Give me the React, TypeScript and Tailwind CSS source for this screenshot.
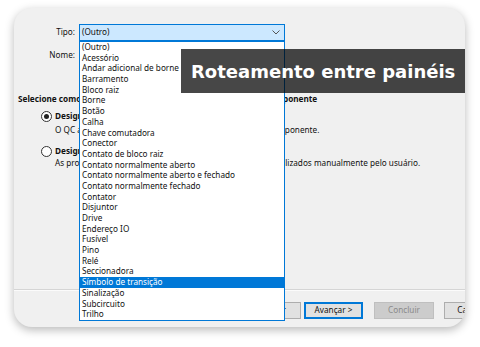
import React from 'react';

const items = [
  '(Outro)',
  'Acessório',
  'Andar adicional de borne',
  'Barramento',
  'Bloco raiz',
  'Borne',
  'Botão',
  'Calha',
  'Chave comutadora',
  'Conector',
  'Contato de bloco raiz',
  'Contato normalmente aberto',
  'Contato normalmente aberto e fechado',
  'Contato normalmente fechado',
  'Contator',
  'Disjuntor',
  'Drive',
  'Endereço IO',
  'Fusível',
  'Pino',
  'Relé',
  'Seccionadora',
  'Símbolo de transição',
  'Sinalização',
  'Subcircuito',
  'Trilho',
];

const selected = 'Símbolo de transição';

function Radio({ checked }: { checked?: boolean }) {
  return (
    <span className="w-[11px] h-[11px] rounded-full border border-[#333] bg-white flex items-center justify-center shrink-0">
      {checked && <span className="w-[5px] h-[5px] rounded-full bg-[#222]" />}
    </span>
  );
}

export default function App() {
  return (
    <div className="w-[480px] h-[347px] bg-white overflow-hidden pt-[8px] pl-[14px]">
      <div className="relative w-[451px] h-[319px] rounded-[18px] bg-[#f0f0f0] overflow-hidden shadow-[0_3px_10px_rgba(0,0,0,0.28)] font-['Noto_Sans',sans-serif] text-[8.2px] text-[#111] flex flex-col">
        {/* Tipo */}
        <div className="mt-[16px] flex items-center h-[17px]">
          <span className="w-[61px] text-right">Tipo:</span>
          <div className="ml-[4px] w-[206px] h-[17px] border border-[#0078d7] bg-[#cce8ff] flex items-center justify-between pl-[2px] pr-[4px]">
            <span>(Outro)</span>
            <svg width="8" height="5" viewBox="0 0 8 5" fill="none" stroke="#555" strokeWidth="1">
              <path d="M0.5 0.5 L4 4 L7.5 0.5" />
            </svg>
          </div>
        </div>

        {/* Nome */}
        <div className="mt-[6px] flex items-center h-[17px]">
          <span className="w-[61px] text-right">Nome:</span>
          <div className="ml-[4px] w-[206px] h-[17px] border border-[#7a7a7a] bg-white" />
        </div>

        <div className="mt-[29px] pl-[4px] h-[11px] leading-[11px] font-bold whitespace-nowrap">
          Selecione como deseja atribuir a designação ao novo tipo de componente
        </div>

        <div className="mt-[6px] pl-[27px] h-[12px] flex items-center gap-[3px]">
          <Radio checked />
          <span className="font-bold">Designação automática</span>
        </div>
        <div className="mt-[2px] pl-[41px] h-[11px] leading-[11px] whitespace-nowrap">
          O QC atribuirá automaticamente a designação ao novo componente.
        </div>

        <div className="mt-[10px] pl-[27px] h-[12px] flex items-center gap-[3px]">
          <Radio />
          <span className="font-bold">Designação manual</span>
        </div>
        <div className="pl-[41px] h-[11px] leading-[11px] whitespace-nowrap">
          As propriedades de designação serão definidas e valores utilizados manualmente pelo usuário.
        </div>

        {/* footer */}
        <div className="mt-auto h-[2px] border-t border-[#d5d5d5] bg-white/70" />
        <div className="mt-[11px] mb-[8px] h-[17px] flex pl-[227px] whitespace-nowrap">
          <button className="shrink-0 w-[60px] h-[17px] border border-[#adadad] bg-[#e1e1e1] flex items-center justify-center">
            &lt; Voltar
          </button>
          <button className="shrink-0 ml-[3px] w-[59px] h-[17px] border-2 border-[#0078d7] bg-[#e1e1e1] flex items-center justify-center">
            Avançar &gt;
          </button>
          <button className="shrink-0 ml-[11px] w-[60px] h-[17px] border border-[#bfbfbf] bg-[#cccccc] text-[#8a8a8a] flex items-center justify-center">
            Concluir
          </button>
          <button className="shrink-0 ml-[10px] w-[60px] h-[17px] border border-[#adadad] bg-[#e1e1e1] flex items-center justify-center">
            Cancelar
          </button>
        </div>

        {/* open dropdown list */}
        <ul className="absolute left-[65px] top-[33px] w-[206px] h-[280px] border border-[#0078d7] bg-white">
          {items.map((item) => (
            <li
              key={item}
              className={`h-[10.7px] leading-[10.7px] pl-[2px] whitespace-nowrap ${
                item === selected ? 'bg-[#0078d7] text-white' : ''
              }`}
            >
              {item}
            </li>
          ))}
        </ul>

        {/* caption banner */}
        <div className="absolute left-[167px] top-[41px] right-0 h-[44px] bg-black/[0.72] flex items-center pl-[10px]">
          <span className="font-['DejaVu_Sans',sans-serif] font-bold text-[18px] text-white whitespace-nowrap">
            Roteamento entre painéis
          </span>
        </div>
      </div>
    </div>
  );
}
